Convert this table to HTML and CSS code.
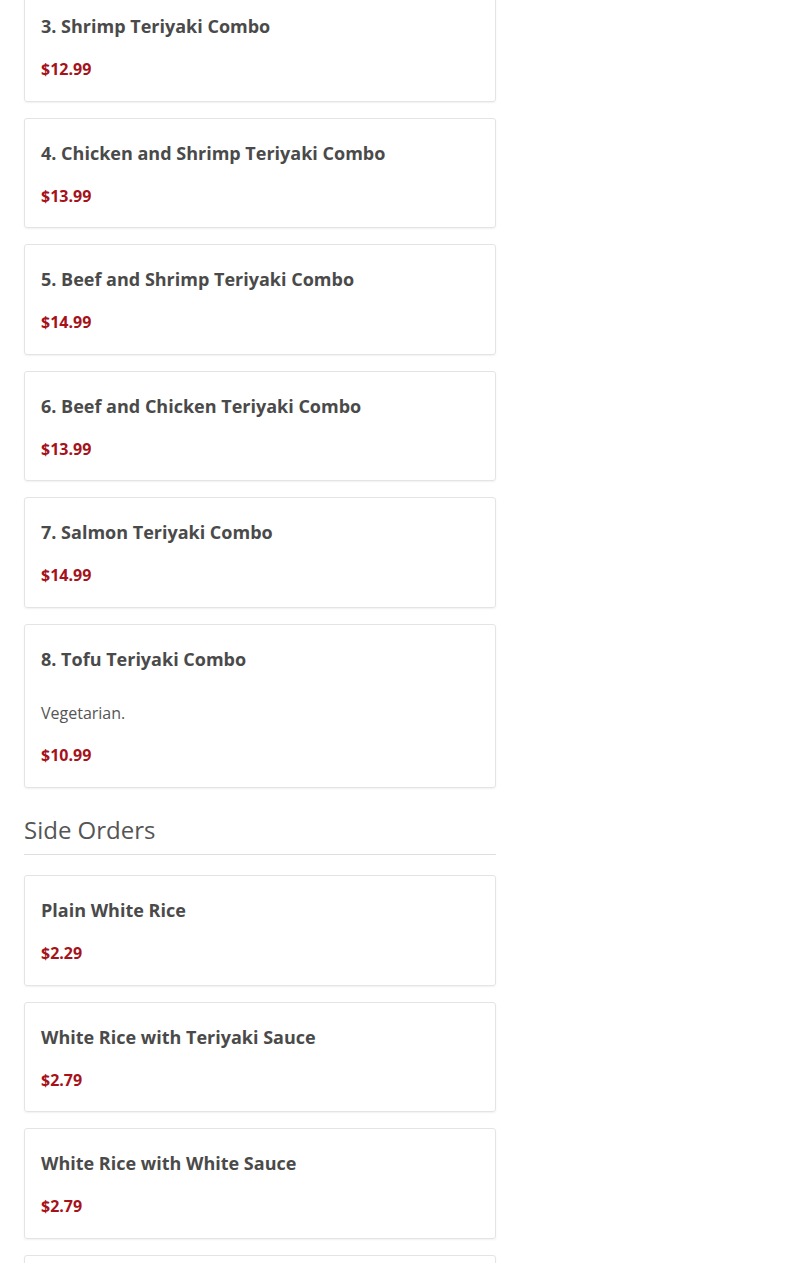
FILE: index.html
```html
<!DOCTYPE html>
<html>
<head>
<meta charset="utf-8">
<link rel="stylesheet" href="styles.css">
</head>
<body>
<div class="menu">
  <div class="card"><h3 class="title">3. Shrimp Teriyaki Combo</h3><div class="price">$12.99</div></div>
  <div class="card"><h3 class="title">4. Chicken and Shrimp Teriyaki Combo</h3><div class="price">$13.99</div></div>
  <div class="card"><h3 class="title">5. Beef and Shrimp Teriyaki Combo</h3><div class="price">$14.99</div></div>
  <div class="card"><h3 class="title">6. Beef and Chicken Teriyaki Combo</h3><div class="price">$13.99</div></div>
  <div class="card"><h3 class="title">7. Salmon Teriyaki Combo</h3><div class="price">$14.99</div></div>
  <div class="card"><h3 class="title">8. Tofu Teriyaki Combo</h3><p class="desc">Vegetarian.</p><div class="price">$10.99</div></div>
  <h2 class="section">Side Orders</h2>
  <div class="card"><h3 class="title">Plain White Rice</h3><div class="price">$2.29</div></div>
  <div class="card"><h3 class="title">White Rice with Teriyaki Sauce</h3><div class="price">$2.79</div></div>
  <div class="card"><h3 class="title">White Rice with White Sauce</h3><div class="price">$2.79</div></div>
  <div class="card card-last"></div>
</div>
</body>
</html>
```
FILE: styles.css
```css
html, body {
  margin: 0;
  padding: 0;
  background: #fff;
  overflow: hidden;
}
body {
  font-family: "Open Sans", "Liberation Sans", sans-serif;
  color: #4a4a4a;
}
.menu {
  width: 472px;
  margin: -9px 0 0 24px;
  display: flex;
  flex-direction: column;
}
.card {
  border: 1px solid #e4e4e4;
  border-radius: 3px;
  box-shadow: 0 1px 2px rgba(0,0,0,0.06);
  padding: 16px;
  height: 110.5px;
  box-sizing: border-box;
  margin-bottom: 16px;
  display: flex;
  flex-direction: column;
}
.card:has(.desc) {
  height: 164.5px;
}
.title {
  margin: 0;
  padding-top: 6px;
  font-size: 18px;
  font-weight: 700;
  line-height: 24px;
  color: #4a4a4a;
}
.desc {
  margin: 30px 0 0;
  font-size: 16px;
  line-height: 24px;
  color: #555;
}
.price {
  margin-top: 20px;
  font-size: 16px;
  font-weight: 700;
  line-height: 22px;
  color: #a6121a;
}
.desc + .price {
  margin-top: 19px;
}
.section {
  margin: 10px 0 20px;
  padding-bottom: 8px;
  border-bottom: 1px solid #dedede;
  font-size: 24px;
  font-weight: 400;
  line-height: 32px;
  color: #555;
}
```
